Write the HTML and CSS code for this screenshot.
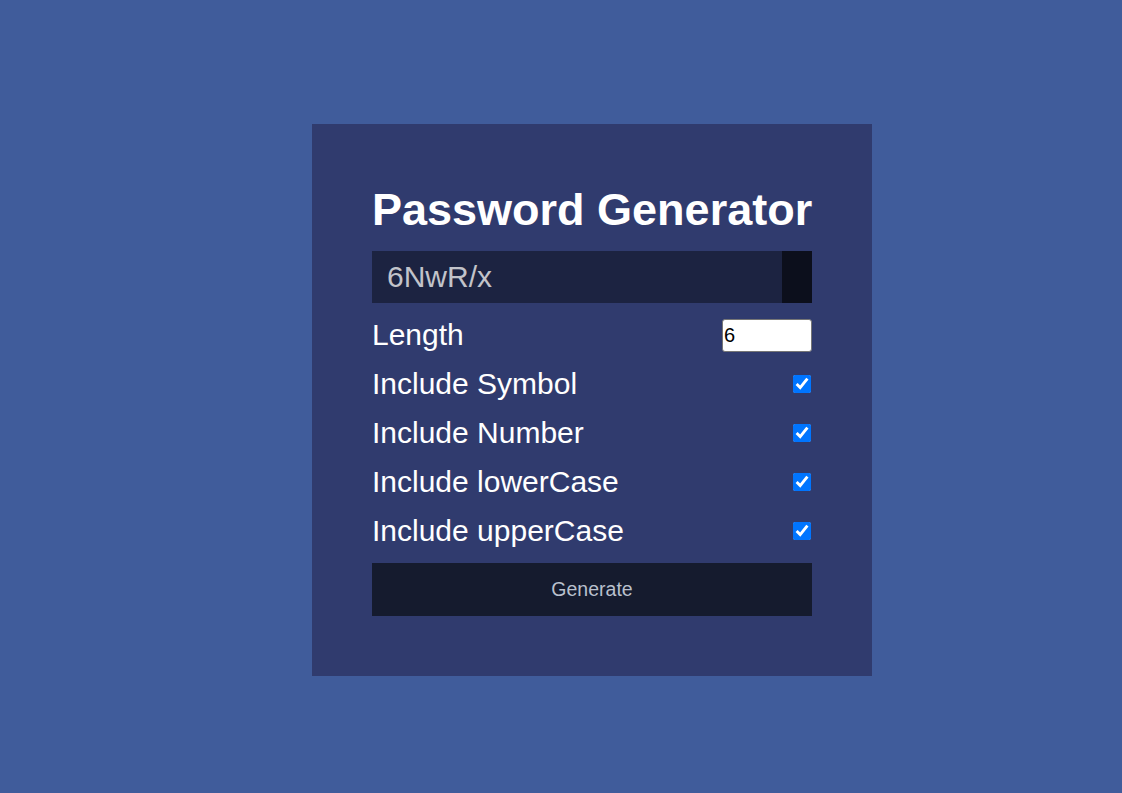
FILE: index.html
```html
<!DOCTYPE html>
<html lang="en">
<head>
<meta charset="utf-8">
<title>Password Generator</title>
<link rel="stylesheet" href="styles.css">
</head>
<body>
  <div class="container">
    <h2 class="title">Password Generator</h2>
    <div class="result">
      <span class="result-text">6NwR/x</span>
      <button class="copy-btn" aria-label="Copy"></button>
    </div>
    <div class="settings">
      <div class="setting">
        <label for="length">Length</label>
        <input type="number" id="length" class="num-input" value="6">
      </div>
      <div class="setting">
        <label for="symbol">Include Symbol</label>
        <input type="checkbox" id="symbol" class="check" checked>
      </div>
      <div class="setting">
        <label for="number">Include Number</label>
        <input type="checkbox" id="number" class="check" checked>
      </div>
      <div class="setting">
        <label for="lower">Include lowerCase</label>
        <input type="checkbox" id="lower" class="check" checked>
      </div>
      <div class="setting">
        <label for="upper">Include upperCase</label>
        <input type="checkbox" id="upper" class="check" checked>
      </div>
    </div>
    <button class="generate">Generate</button>
  </div>
</body>
</html>
```
FILE: styles.css
```css
* {
  box-sizing: border-box;
}

html, body {
  margin: 0;
  height: 100%;
}

body {
  background: #405c9b;
  font-family: "Liberation Sans", Arial, sans-serif;
  color: #ffffff;
  padding: 124px 0 0 312px;
}

.container {
  width: 560px;
  height: 552px;
  background: #303b6e;
  padding: 60px;
}

.title {
  margin: 0;
  font-size: 45px;
  font-weight: 700;
  line-height: 52px;
  white-space: nowrap;
}

.result {
  margin-top: 15px;
  height: 52px;
  background: #1c2341;
  display: flex;
  align-items: center;
  justify-content: space-between;
  padding-left: 15px;
}

.result-text {
  font-size: 30px;
  line-height: 34px;
  color: #c2c3ca;
}

.copy-btn {
  width: 30px;
  height: 52px;
  background: #0c0f1c;
  border: none;
  padding: 0;
  margin: 0;
}

.settings {
  display: flex;
  flex-direction: column;
  gap: 15px;
  margin-top: 15px;
}

.setting {
  display: flex;
  align-items: center;
  justify-content: space-between;
  height: 34px;
  font-size: 30px;
  line-height: 34px;
}

.num-input {
  width: 90px;
  height: 33px;
  margin: 0;
  padding: 1px 1px;
  font-family: "Liberation Sans", Arial, sans-serif;
  font-size: 20px;
  color: #000;
  background: #fff;
  border: 1px solid #767676;
  border-radius: 3px;
}

.check {
  width: 18px;
  height: 18px;
  margin: 0 1px 0 0;
  accent-color: #0075ff;
}

.generate {
  display: block;
  width: 100%;
  height: 53px;
  margin-top: 15px;
  background: #151b2e;
  color: #b9c0cd;
  border: none;
  font-family: "Liberation Sans", Arial, sans-serif;
  font-size: 19.5px;
}
```
